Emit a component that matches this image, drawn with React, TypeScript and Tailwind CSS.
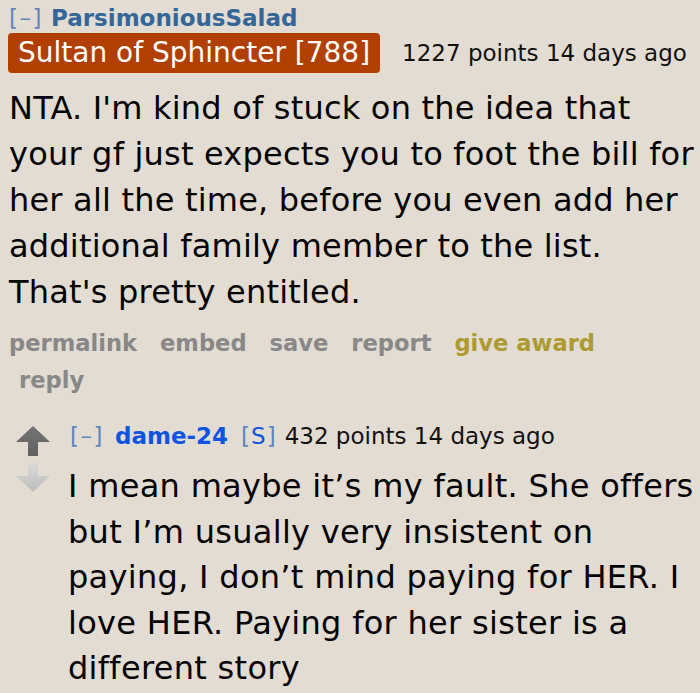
import React from "react";

const font = { fontFamily: '"DejaVu Sans", Verdana, sans-serif' };

function UpArrow() {
  return (
    <svg width="34" height="30" viewBox="0 0 34 30">
      <defs>
        <linearGradient id="ug" x1="0" y1="0" x2="0" y2="1">
          <stop offset="0" stopColor="#747474" />
          <stop offset="1" stopColor="#626262" />
        </linearGradient>
      </defs>
      <polygon points="17,0 34,16 22,16 22,30 12,30 12,16 0,16" fill="url(#ug)" />
    </svg>
  );
}
function DownArrow() {
  return (
    <svg width="34" height="30" viewBox="0 0 34 30">
      <defs>
        <linearGradient id="dg" x1="0" y1="0" x2="0" y2="1">
          <stop offset="0" stopColor="#dadada" />
          <stop offset="1" stopColor="#bcbcbc" />
        </linearGradient>
      </defs>
      <polygon points="12,0 22,0 22,14 34,14 17,30 0,14 12,14" fill="url(#dg)" />
    </svg>
  );
}

export default function App() {
  return (
    <div className="w-[700px] h-[693px] bg-[#e2dcd3] overflow-hidden text-black" style={font}>
      <div className="pl-[9px] pt-[4px]">
        <div className="text-[23px] leading-[28px] whitespace-nowrap">
          <span className="text-[#5f86bd] tracking-[1.5px]">[–]</span>
          <span className="ml-[8px] font-bold text-[#336699]">ParsimoniousSalad</span>
        </div>
        <div className="flex items-center mt-[1px]">
          <span className="bg-[#b03f00] text-white rounded-[4px] text-[28px] leading-[40px] px-[10px] -ml-[1px] whitespace-nowrap">
            Sultan of Sphincter [788]
          </span>
          <span className="ml-[22px] text-[23px] text-[#111] whitespace-nowrap">1227 points 14 days ago</span>
        </div>
        <div className="mt-[12px] text-[32px] leading-[46px] tracking-[0.2px] whitespace-nowrap">
          <div>NTA. I'm kind of stuck on the idea that</div>
          <div>your gf just expects you to foot the bill for</div>
          <div>her all the time, before you even add her</div>
          <div>additional family member to the list.</div>
          <div>That's pretty entitled.</div>
        </div>
        <div className="mt-[10px] flex gap-x-[23px] text-[22.6px] leading-[37px] font-bold text-[#888888] whitespace-nowrap">
          <span>permalink</span>
          <span>embed</span>
          <span>save</span>
          <span>report</span>
          <span className="text-[#ad9a30]">give award</span>
        </div>
        <div className="pl-[10px] text-[22.6px] leading-[37px] font-bold text-[#888888]">reply</div>
        <div className="flex mt-[23px]">
          <div className="flex flex-col w-[34px] ml-[7px] pt-[4px] gap-[6px]">
            <UpArrow />
            <DownArrow />
          </div>
          <div className="ml-[18px]">
            <div className="text-[23px] leading-[28px] whitespace-nowrap pl-[2px]">
              <span className="text-[#5f86bd] tracking-[1.5px]">[–]</span>
              <span className="ml-[11px] font-bold text-[#0d55e0]">dame-24</span>
              <span className="ml-[13px] text-[#5f86bd]">[</span>
              <span className="text-[#0d55e0] mx-[1px]">S</span>
              <span className="text-[#5f86bd]">]</span>
              <span className="ml-[9px] text-[#111]">432 points 14 days ago</span>
            </div>
            <div className="mt-[14px] text-[32px] leading-[45.6px] tracking-[0.3px] whitespace-nowrap">
              <div>I mean maybe it’s my fault. She offers</div>
              <div>but I’m usually very insistent on</div>
              <div>paying, I don’t mind paying for HER. I</div>
              <div>love HER. Paying for her sister is a</div>
              <div>different story</div>
            </div>
          </div>
        </div>
      </div>
    </div>
  );
}
